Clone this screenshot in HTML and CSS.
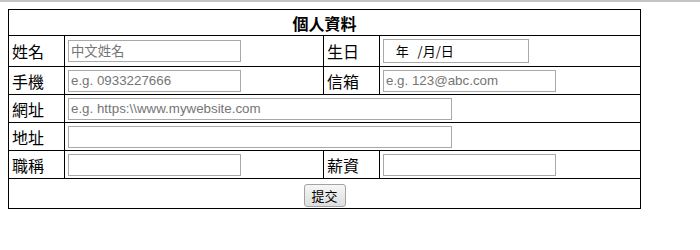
FILE: index.html
```html
<!DOCTYPE html>
<html lang="zh-Hant">
<head>
<meta charset="utf-8">
<title>個人資料</title>
<link rel="stylesheet" href="styles.css">
</head>
<body>
<form class="form">
<table class="sheet">
  <colgroup>
    <col class="c-label">
    <col class="c-field">
    <col class="c-label">
    <col class="c-field2">
  </colgroup>
  <tr class="r-head"><th colspan="4" class="head">個人資料</th></tr>
  <tr class="r-1">
    <td class="label">姓名</td>
    <td><input class="inp" type="text" placeholder="中文姓名"></td>
    <td class="label">生日</td>
    <td><div class="date">  年   /月/日</div></td>
  </tr>
  <tr class="r-n">
    <td class="label">手機</td>
    <td><input class="inp" type="text" placeholder="e.g. 0933227666"></td>
    <td class="label">信箱</td>
    <td><input class="inp" type="text" placeholder="e.g. 123@abc.com"></td>
  </tr>
  <tr class="r-n">
    <td class="label">網址</td>
    <td colspan="3"><input class="inp wide" type="text" placeholder="e.g. https:\\www.mywebsite.com"></td>
  </tr>
  <tr class="r-n">
    <td class="label">地址</td>
    <td colspan="3"><input class="inp wide" type="text"></td>
  </tr>
  <tr class="r-n">
    <td class="label">職稱</td>
    <td><input class="inp" type="text"></td>
    <td class="label">薪資</td>
    <td><input class="inp" type="text"></td>
  </tr>
  <tr class="r-last">
    <td colspan="4" class="center"><button class="btn" type="button">提交</button></td>
  </tr>
</table>
</form>
</body>
</html>
```

FILE: styles.css
```css
html {
  border-top: 2px solid #c4c4c4;
  background: #fff;
}
body {
  margin: 7px 8px 8px;
  font-family: "Noto Sans CJK TC", "Liberation Serif", serif;
  color: #000;
}
.form { margin: 0; }
.sheet {
  border-collapse: collapse;
  table-layout: fixed;
  width: 633px;
  border: 1px solid #000;
}
.c-label { width: 56px; }
.c-field { width: 259px; }
.c-field2 { width: auto; }
.sheet th,
.sheet td {
  border: 1px solid #000;
  padding: 0 3px;
  vertical-align: middle;
  text-align: left;
}
.r-head { height: 26px; }
.r-1 { height: 31px; }
.r-n { height: 28px; }
.r-last { height: 30px; }
.sheet .head {
  text-align: center;
  font-weight: bold;
  font-size: 16px;
  line-height: 20px;
}
.label {
  font-size: 16px;
  line-height: 20px;
  white-space: nowrap;
}
.sheet .center { text-align: center; }
.inp {
  display: block;
  box-sizing: border-box;
  width: 173px;
  height: 22px;
  margin: 0;
  padding: 0 2px;
  border: 1px solid #a9a9a9;
  border-radius: 0;
  font-family: "Liberation Sans", "Noto Sans CJK TC", sans-serif;
  font-size: 13.33px;
  color: #000;
  background: #fff;
  outline: none;
}
.inp::placeholder { color: #757575; }
.inp.wide { width: 384px; }
.date {
  box-sizing: border-box;
  width: 146px;
  height: 24px;
  border: 1px solid #a9a9a9;
  padding: 0 6px;
  font-size: 13px;
  line-height: 22px;
  white-space: pre;
  color: #000;
}
.btn {
  box-sizing: border-box;
  width: 42px;
  height: 23px;
  margin: 0;
  padding: 0;
  font-family: "Noto Sans CJK TC", sans-serif;
  font-size: 13px;
  line-height: 21px;
  color: #000;
  border: 1px solid #a3a3a3;
  border-radius: 3px;
  background: linear-gradient(#f6f6f6, #dedede);
  vertical-align: middle;
}
```
